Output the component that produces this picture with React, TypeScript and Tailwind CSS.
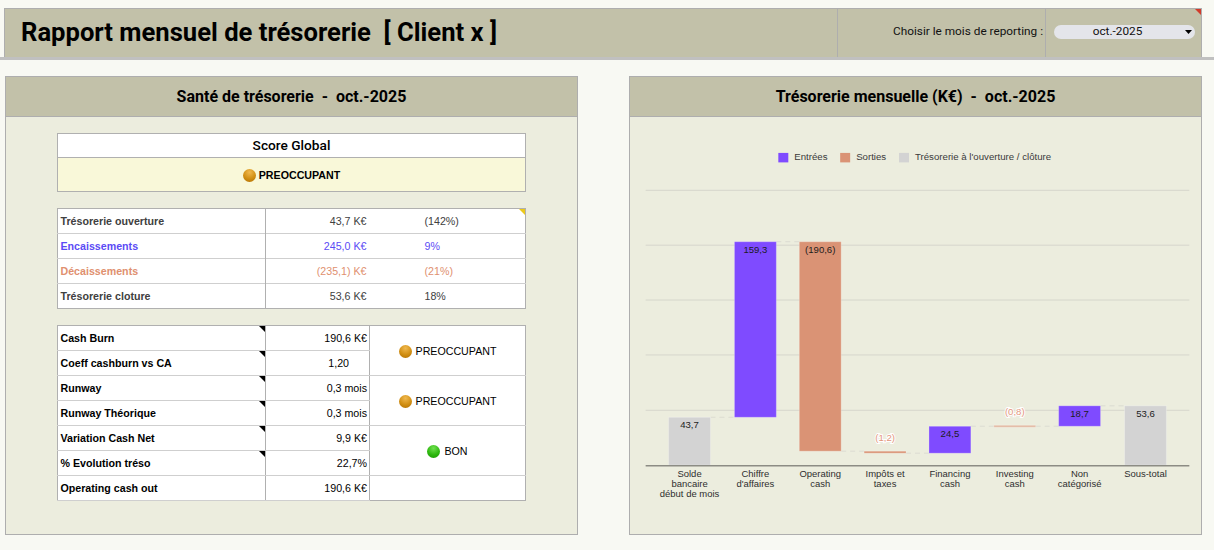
// Rapport mensuel de trésorerie: header bar, health tables on the left, waterfall on the right.
import type { ReactNode } from 'react';

const amber = 'bg-[radial-gradient(circle_at_50%_25%,#f0b84e_0%,#d18f14_55%,#b06d00_100%)]';
const green = 'bg-[radial-gradient(circle_at_50%_25%,#6fe04f_0%,#2eb80f_55%,#179400_100%)]';

function Ball({ tone }: { tone: string }) {
  return <span className={'inline-block w-[13px] h-[13px] rounded-full ' + tone} />;
}

// small folded corner marking a cell comment
function Fold({ color }: { color: string }) {
  return (
    <span
      className={'absolute top-0 right-0 w-[6px] h-[6px] [clip-path:polygon(0_0,100%_0,100%_100%)] ' + color}
    />
  );
}

function Status({ tone, label }: { tone: string; label: string }) {
  return (
    <span className="flex items-center justify-center gap-[4px] text-[10.67px] text-black pt-[1px]">
      <Ball tone={tone} />
      {label}
    </span>
  );
}

function Panel({ title, children }: { title: string; children: ReactNode }) {
  return (
    <section className="w-[573px] h-[459px] flex flex-col border border-[#aeaeae] bg-[#ecedde]">
      <h2 className="h-[40px] shrink-0 flex items-center justify-center bg-[#c2c1a9] border-b border-[#aeaeae] font-['Roboto',sans-serif] font-bold text-[16px] text-black whitespace-pre">
        {title}
      </h2>
      {children}
    </section>
  );
}

const flows = [
  { label: 'Trésorerie ouverture', value: '43,7 K€', pct: '(142%)', text: 'text-[#404040]', fold: true },
  { label: 'Encaissements', value: '245,0 K€', pct: '9%', text: 'text-[#5b4bf5]', fold: false },
  { label: 'Décaissements', value: '(235,1) K€', pct: '(21%)', text: 'text-[#e0906f]', fold: false },
  { label: 'Trésorerie cloture', value: '53,6 K€', pct: '18%', text: 'text-[#404040]', fold: false },
];

type Kpi = {
  label: string;
  value: string;
  status?: { tone: string; label: string };
  offset?: boolean;
  last?: boolean;
  fold: boolean;
};

const kpis: Kpi[] = [
  { label: 'Cash Burn', value: '190,6 K€', status: { tone: amber, label: 'PREOCCUPANT' }, fold: true },
  { label: 'Coeff cashburn vs CA', value: '1,20', offset: true, fold: true },
  { label: 'Runway', value: '0,3 mois', status: { tone: amber, label: 'PREOCCUPANT' }, fold: true },
  { label: 'Runway Théorique', value: '0,3 mois', fold: true },
  { label: 'Variation Cash Net', value: '9,9 K€', status: { tone: green, label: 'BON' }, fold: true },
  { label: '% Evolution tréso', value: '22,7%', fold: true },
  { label: 'Operating cash out', value: '190,6 K€', last: true, fold: false },
];

function HealthPanel() {
  return (
    <div className="pt-[16px] pl-[51px] font-['Liberation_Sans',Arial,sans-serif]">
      <table className="w-[469px] table-fixed border-collapse border border-[#b0b0b0] bg-white">
        <tbody>
          <tr className="h-[24px]">
            <td className="text-center font-['Roboto',sans-serif] font-medium text-[13.7px] text-black border border-[#b0b0b0]">
              Score Global
            </td>
          </tr>
          <tr className="h-[34px] bg-[#f9f8d9]">
            <td className="border border-[#b0b0b0]">
              <span className="flex items-center justify-center gap-[3px] pt-[1px] text-[10.67px] font-bold text-black">
                <Ball tone={amber} />
                PREOCCUPANT
              </span>
            </td>
          </tr>
        </tbody>
      </table>

      <table className="w-[469px] mt-[16px] table-fixed border-collapse border border-[#b0b0b0] bg-white text-[10.67px]">
        <colgroup>
          <col className="w-[208px]" />
          <col className="w-[102px]" />
          <col />
        </colgroup>
        <tbody>
          {flows.map((r) => (
            <tr key={r.label} className={'h-[25px] border-b border-[#cfcfcf] last:border-[#b0b0b0] ' + r.text}>
              <td className="pl-[2.5px] font-bold border-r border-[#b0b0b0]">{r.label}</td>
              <td className="text-right pr-[1px]">{r.value}</td>
              <td className="relative pl-[57px]">
                {r.pct}
                {r.fold && <Fold color="bg-[#ecc91a]" />}
              </td>
            </tr>
          ))}
        </tbody>
      </table>

      <table className="w-[469px] mt-[16px] table-fixed border-collapse border border-[#b0b0b0] bg-white text-[10.67px] text-black">
        <colgroup>
          <col className="w-[208px]" />
          <col className="w-[104px]" />
          <col />
        </colgroup>
        <tbody>
          {kpis.map((r) => (
            <tr key={r.label} className="h-[25px]">
              <td className="relative pl-[2.5px] font-bold border-b border-r border-[#cfcfcf] border-r-[#b0b0b0]">
                {r.label}
                {r.fold && <Fold color="bg-black" />}
              </td>
              <td
                className={
                  'text-right border-b border-r border-[#cfcfcf] border-r-[#b0b0b0] ' +
                  (r.offset ? 'pr-[20px]' : 'pr-[2px]')
                }
              >
                {r.value}
              </td>
              {r.status && (
                <td rowSpan={2} className="border-b border-[#cfcfcf]">
                  <Status tone={r.status.tone} label={r.status.label} />
                </td>
              )}
              {r.last && <td />}
            </tr>
          ))}
        </tbody>
      </table>
    </div>
  );
}

const BAR_W = 42;
const bars = [
  { x: 668, top: 418, bottom: 466, fill: '#d3d3d3', label: '43,7', ly: 429 },
  { x: 734, top: 242, bottom: 418, fill: '#7f4bff', label: '159,3', ly: 253 },
  { x: 799, top: 242, bottom: 452, fill: '#da9375', label: '(190,6)', ly: 253 },
  { x: 864, top: 452, bottom: 454, fill: '#da9375', label: '(1,2)', ly: 441.5, soft: true },
  { x: 929, top: 427, bottom: 454, fill: '#7f4bff', label: '24,5', ly: 438 },
  { x: 994, top: 426, bottom: 428, fill: '#e3b9a3', label: '(0,8)', ly: 415.5, soft: true },
  { x: 1059, top: 406.5, bottom: 427, fill: '#7f4bff', label: '18,7', ly: 418 },
  { x: 1125, top: 406.5, bottom: 466, fill: '#d3d3d3', label: '53,6', ly: 418 },
];

const links = [
  [710, 734, 418],
  [776, 799, 242],
  [841, 864, 452],
  [906, 929, 454],
  [971, 994, 427],
  [1036, 1059, 427],
  [1101, 1125, 406.5],
];

const axis = [
  { x: 689, lines: ['Solde', 'bancaire', 'début de mois'] },
  { x: 755, lines: ['Chiffre', "d'affaires"] },
  { x: 820, lines: ['Operating', 'cash'] },
  { x: 885, lines: ['Impôts et', 'taxes'] },
  { x: 950, lines: ['Financing', 'cash'] },
  { x: 1015, lines: ['Investing', 'cash'] },
  { x: 1080, lines: ['Non', 'catégorisé'] },
  { x: 1146, lines: ['Sous-total'] },
];

const legend = [
  { x: 778, fill: '#7f4bff', label: 'Entrées' },
  { x: 840, fill: '#da9375', label: 'Sorties' },
  { x: 899, fill: '#d3d3d3', label: "Trésorerie à l'ouverture / clôture" },
];

function Waterfall() {
  return (
    <svg
      width={571}
      height={418}
      viewBox="630 117 571 418"
      className="block font-['Liberation_Sans',Arial,sans-serif]"
    >
      {legend.map((l) => (
        <g key={l.label}>
          <rect x={l.x} y={153} width={10} height={9.5} fill={l.fill} />
          <text x={l.x + 16} y={160} fontSize={9.7} fill="#3a3a3a">
            {l.label}
          </text>
        </g>
      ))}
      {[190.5, 245.5, 300.5, 355.5, 411].map((y) => (
        <line key={y} x1={645} x2={1190} y1={y} y2={y} stroke="#d6d6cc" strokeWidth={1} />
      ))}
      {links.map(([a, b, y]) => (
        <line key={a} x1={a} x2={b} y1={y} y2={y} stroke="#dcdcd2" strokeDasharray="5 4" />
      ))}
      {bars.map((b) => (
        <rect
          key={b.x}
          x={b.x}
          y={b.top}
          width={BAR_W}
          height={b.bottom - b.top}
          fill={b.fill}
          stroke="#ffffff"
          strokeOpacity={0.25}
          strokeWidth={1}
        />
      ))}
      <line x1={645} x2={1190} y1={466.5} y2={466.5} stroke="#8c8c84" strokeWidth={1.5} />
      {bars.map((b) => (
        <text
          key={b.x}
          x={b.x + BAR_W / 2}
          y={b.ly}
          fontSize={9.6}
          textAnchor="middle"
          fill={b.soft ? '#e3957c' : '#1c1c1c'}
          stroke={b.soft ? '#ffffff' : 'none'}
          strokeWidth={b.soft ? 2 : 0}
          paintOrder="stroke"
        >
          {b.label}
        </text>
      ))}
      {axis.map((a) => (
        <text key={a.x} x={a.x} fontSize={9.5} textAnchor="middle" fill="#2e2e2e">
          {a.lines.map((line, i) => (
            <tspan key={line} x={a.x} y={478 + i * 10}>
              {line}
            </tspan>
          ))}
        </text>
      ))}
    </svg>
  );
}

export default function App() {
  return (
    <div className="w-[1214px] h-[550px] overflow-hidden bg-[#f8f9f3]">
      <div className="pt-[8px] border-b-[3px] border-[#c0c0c0]">
        <header className="ml-[4px] w-[1198px] h-[49px] flex bg-[#c2c1a9] border-t border-x border-[#aeaeae]">
          <div className="w-[833px] flex items-center pl-[16px] pb-[2px] border-r border-[#aeaeae] font-['Roboto',sans-serif] font-bold text-[25.6px] text-black whitespace-pre">
            Rapport mensuel de trésorerie  [ Client x ]
          </div>
          <div className="w-[208px] flex items-center justify-end pr-[2px] pb-[2px] border-r border-[#aeaeae] font-['Roboto',sans-serif] text-[11.8px] text-[#111]">
            Choisir le mois de reporting :
          </div>
          <div className="relative flex-1 flex items-center pl-[8px] pb-[2px]">
            <div className="relative w-[141px] h-[14px] rounded-full bg-[#e4e5ea] flex items-center justify-center pr-[14px] font-['Roboto',sans-serif] text-[11.8px] text-[#111]">
              oct.-2025
              <span className="absolute right-[3px] top-[5px] w-[7px] h-[4px] bg-black [clip-path:polygon(0_0,100%_0,50%_100%)]" />
            </div>
            <Fold color="bg-[#d23a2a]" />
          </div>
        </header>
      </div>
      <main className="flex gap-[51px] pl-[5px] pt-[16px]">
        <Panel title="Santé de trésorerie  -  oct.-2025">
          <HealthPanel />
        </Panel>
        <Panel title="Trésorerie mensuelle (K€)  -  oct.-2025">
          <Waterfall />
        </Panel>
      </main>
    </div>
  );
}
